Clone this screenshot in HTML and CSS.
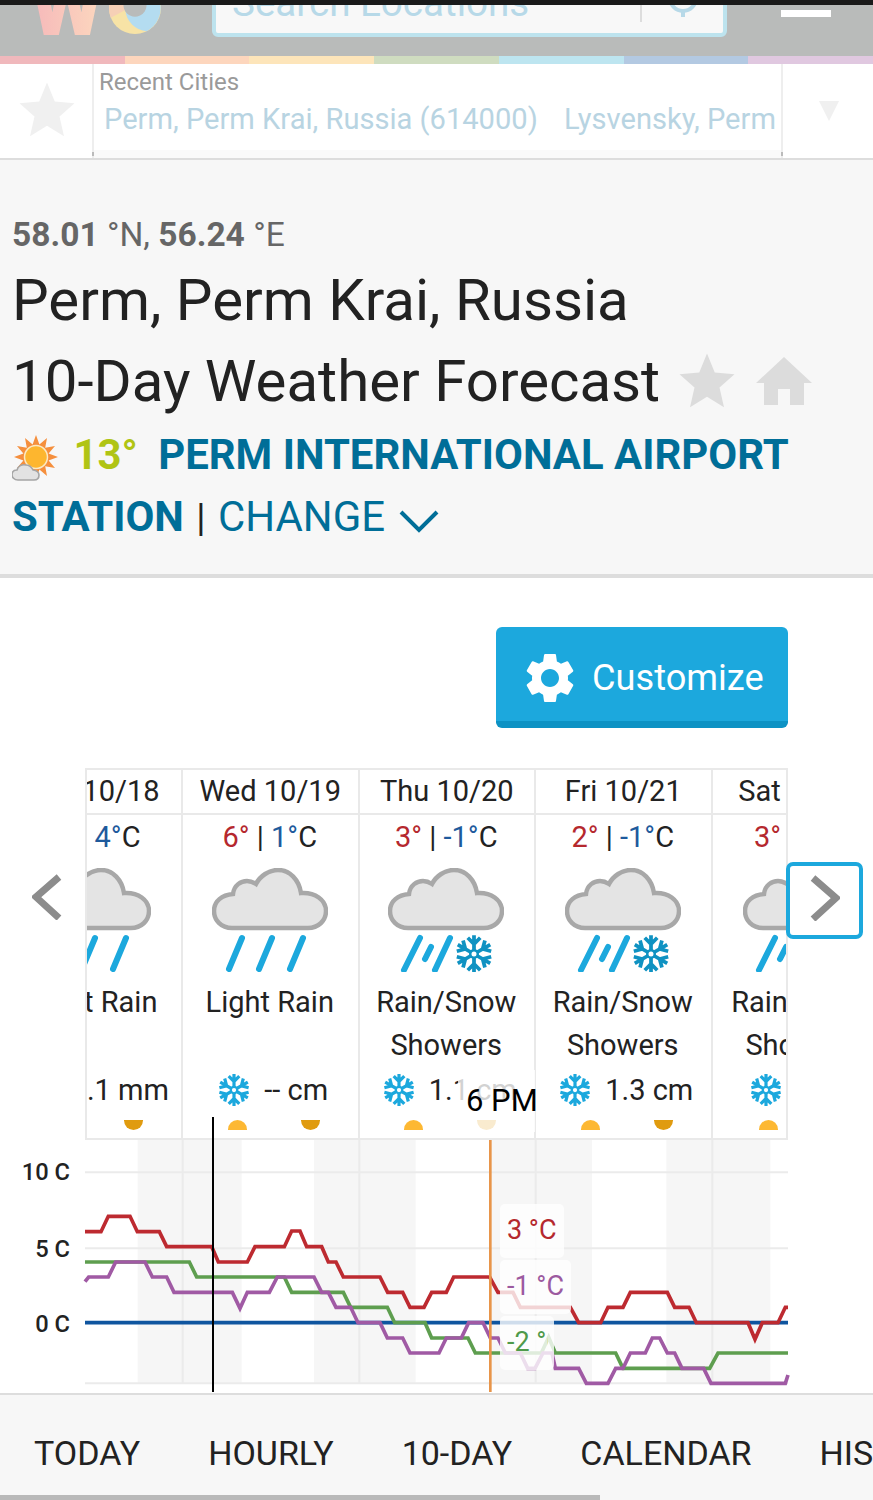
FILE: index.html
```html
<!DOCTYPE html>
<html lang="en">
<head>
  <meta charset="UTF-8" />
  <meta name="viewport" content="width=device-width, initial-scale=1.0" />
  <title>Perm 10-Day Weather Forecast</title>
  <link rel="stylesheet" href="styles.css">
</head>
<body>
  <svg class="defs" width="0" height="0">
    <defs>
      <path id="cloud" d="M20 60C9 60 2 52 2 43C2 33 10 27 21 26C22 17 29 13 35 13C38 13 41 14 44 16C48 8 57 2 66 2C78 2 87 12 89 25C103 24 114 32 114 43C114 53 106 60 96 60Z" fill="#e4e4e4" stroke="#a8a8a8" stroke-width="4.5"/>
      <g id="arm">
        <path d="M0 0V-15M-5 -13L0 -8L5 -13" fill="none" stroke="currentColor" stroke-width="3"/>
      </g>
      <symbol id="flake" viewBox="-16 -16 32 32">
        <use href="#arm"/>
        <use href="#arm" transform="rotate(60)"/>
        <use href="#arm" transform="rotate(120)"/>
        <use href="#arm" transform="rotate(180)"/>
        <use href="#arm" transform="rotate(240)"/>
        <use href="#arm" transform="rotate(300)"/>
        <circle r="3" fill="#fff" stroke="currentColor" stroke-width="2"/>
      </symbol>
      <symbol id="rain-icon" viewBox="0 0 116 104">
        <use href="#cloud"/>
        <path d="M30 70L17 101M60 70L47 101M91 70L78 101" stroke="#1ca8dd" stroke-width="6" stroke-linecap="round" fill="none"/>
      </symbol>
      <symbol id="mix-icon" viewBox="0 0 116 104">
        <use href="#cloud"/>
        <path d="M32 70L16 102M43 79L37 91M62 70L47 102" stroke="#1ca8dd" stroke-width="6" stroke-linecap="round" fill="none"/>
        <use href="#flake" x="66" y="66" width="40" height="40" class="flake-dark"/>
      </symbol>
      <polygon id="star" points="12 1 15.1 8.6 23 9.3 17 14.6 18.8 22.5 12 18.3 5.2 22.5 7 14.6 1 9.3 8.9 8.6"/>
    </defs>
  </svg>

  <div class="status-bar"></div>

  <header class="site-header">
    <div class="logo">
      <span class="logo-w">W</span>
      <svg class="logo-ring" width="54" height="54" viewBox="0 0 56 56">
        <circle cx="28" cy="28" r="27" fill="#f7e3a6"/>
        <path d="M28 1A27 27 0 0 0 3 38L18 30A10 10 0 0 1 28 18Z" fill="#f6d0b6"/>
        <path d="M28 1A27 27 0 0 1 40 52A24 24 0 0 1 18 30Z" fill="#b4dcf0"/>
        <circle cx="28" cy="25" r="12" fill="#b9bbba"/>
      </svg>
    </div>
    <div class="search">
      <span class="search-text">Search Locations</span>
      <span class="search-divider"></span>
      <svg class="search-icon" width="32" height="32" viewBox="0 0 32 32">
        <circle cx="16" cy="0" r="13" fill="none" stroke="#b7d9e8" stroke-width="4"/>
        <path d="M16 13V19" stroke="#b7d9e8" stroke-width="4"/>
      </svg>
    </div>
    <div class="menu-bar"></div>
  </header>

  <div class="rainbow">
    <span class="c1"></span><span class="c2"></span><span class="c3"></span><span class="c4"></span><span class="c5"></span><span class="c6"></span><span class="c7"></span>
  </div>

  <div class="recent">
    <div class="recent-star">
      <svg width="60" height="60" viewBox="0 0 24 24"><use href="#star"/></svg>
    </div>
    <div class="recent-mid">
      <div class="recent-title">Recent Cities</div>
      <div class="recent-links">
        <a>Perm, Perm Krai, Russia (614000)</a>
        <a>Lysvensky, Perm Krai, Russia</a>
      </div>
    </div>
    <div class="recent-drop"><span class="tri"></span></div>
  </div>

  <section class="location">
    <div class="coords"><b>58.01</b> °N, <b>56.24</b> °E</div>
    <h1 class="city-title">Perm, Perm Krai, Russia<br>10-Day Weather Forecast<svg class="title-star" width="60" height="60" viewBox="0 0 24 24"><use href="#star"/></svg><svg class="title-home" width="56" height="48" viewBox="0 0 56 48"><path d="M28 0L56 26H48V48H34V32H22V48H8V26H0Z"/></svg></h1>
    <div class="station">
      <svg class="sun-icon" width="48" height="46" viewBox="-24 -22 48 46">
        <polygon fill="#f58f3d" points="22,0 12.6,3.4 19,11 9.2,9.2 11,19 3.4,12.6 0,22 -3.4,12.6 -11,19 -9.2,9.2 -19,11 -12.6,3.4 -22,0 -12.6,-3.4 -19,-11 -9.2,-9.2 -11,-19 -3.4,-12.6 0,-22 3.4,-12.6 11,-19 9.2,-9.2 19,-11 12.6,-3.4"/>
        <circle r="11.5" fill="#fdb62f" stroke="#fbe9c4" stroke-width="1.5"/>
        <path d="M-18 23C-22 23 -24 20 -24 18C-24 15 -22 13 -19 13C-18 9 -14 7 -10 8C-6 8 -4 11 -3 13C1 13 3 16 3 18C3 21 1 23 -2 23Z" fill="#e2e2e2" stroke="#a5a5a5" stroke-width="1.6"/>
      </svg>
      <span class="station-temp">13°</span>
      <a class="station-name">PERM INTERNATIONAL AIRPORT STATION</a>
      <span class="pipe">|</span>
      <a class="station-change">CHANGE</a>
      <svg class="change-arrow" width="40" height="24" viewBox="0 0 40 24"><path d="M2 3L20 21L38 3" fill="none" stroke="#006e98" stroke-width="4"/></svg>
    </div>
  </section>

  <div class="customize-row">
    <button class="customize">
      <svg width="48" height="50" viewBox="2.5 2 19 20"><path fill="#fff" d="M19.14 12.94c.04-.3.06-.61.06-.94 0-.32-.02-.64-.07-.94l2.03-1.58c.18-.14.23-.41.12-.61l-1.92-3.32c-.12-.22-.37-.29-.59-.22l-2.39.96c-.5-.38-1.03-.7-1.62-.94l-.36-2.54c-.04-.24-.24-.41-.48-.41h-3.84c-.24 0-.43.17-.47.41l-.36 2.54c-.59.24-1.13.57-1.62.94l-2.39-.96c-.22-.08-.47 0-.59.22L2.74 8.87c-.12.21-.08.47.12.61l2.03 1.58c-.05.3-.09.63-.09.94s.02.64.07.94l-2.03 1.58c-.18.14-.23.41-.12.61l1.92 3.32c.12.22.37.29.59.22l2.39-.96c.5.38 1.03.7 1.62.94l.36 2.54c.05.24.24.41.48.41h3.84c.24 0 .44-.17.47-.41l.36-2.54c.59-.24 1.13-.56 1.62-.94l2.39.96c.22.08.47 0 .59-.22l1.92-3.32c.12-.22.07-.47-.12-.61l-2.01-1.58zM12 15.6c-1.98 0-3.6-1.62-3.6-3.6s1.62-3.6 3.6-3.6 3.6 1.62 3.6 3.6-1.62 3.6-3.6 3.6z"/></svg>
      <span>Customize</span>
    </button>
  </div>

  <div class="forecast">
    <svg class="arrow-prev" width="30" height="46" viewBox="0 0 30 46"><path d="M27 3L4 23L27 44" fill="none" stroke="#8c8c8c" stroke-width="7"/></svg>
    <button class="arrow-next">
      <svg width="30" height="46" viewBox="0 0 30 46"><path d="M3 3L26 23L3 44" fill="none" stroke="#8c8c8c" stroke-width="7"/></svg>
    </button>

    <div class="days">
      <div class="days-track">
        <div class="day">
          <div class="day-date">Tue 10/18</div>
          <div class="day-temp"><span class="hi">7°</span> | <span class="lo">4°</span>C</div>
          <svg class="day-icon" width="116" height="104"><use href="#rain-icon"/></svg>
          <div class="day-cond">Light Rain</div>
          <div class="day-precip"><svg width="34" height="34"><use href="#flake"/></svg><span>0.1 mm</span></div>
          <div class="day-sun"><span class="sunrise"></span><span class="sunset"></span></div>
        </div>
        <div class="day">
          <div class="day-date">Wed 10/19</div>
          <div class="day-temp"><span class="hi">6°</span> | <span class="lo">1°</span>C</div>
          <svg class="day-icon" width="116" height="104"><use href="#rain-icon"/></svg>
          <div class="day-cond">Light Rain</div>
          <div class="day-precip"><svg width="34" height="34"><use href="#flake"/></svg><span>-- cm</span></div>
          <div class="day-sun"><span class="sunrise"></span><span class="sunset"></span></div>
        </div>
        <div class="day">
          <div class="day-date">Thu 10/20</div>
          <div class="day-temp"><span class="hi">3°</span> | <span class="lo">-1°</span>C</div>
          <svg class="day-icon" width="116" height="104"><use href="#mix-icon"/></svg>
          <div class="day-cond">Rain/Snow Showers</div>
          <div class="day-precip"><svg width="34" height="34"><use href="#flake"/></svg><span>1.1 cm</span></div>
          <div class="day-sun"><span class="sunrise"></span><span class="sunset"></span></div>
        </div>
        <div class="day">
          <div class="day-date">Fri 10/21</div>
          <div class="day-temp"><span class="hi">2°</span> | <span class="lo">-1°</span>C</div>
          <svg class="day-icon" width="116" height="104"><use href="#mix-icon"/></svg>
          <div class="day-cond">Rain/Snow Showers</div>
          <div class="day-precip"><svg width="34" height="34"><use href="#flake"/></svg><span>1.3 cm</span></div>
          <div class="day-sun"><span class="sunrise"></span><span class="sunset"></span></div>
        </div>
        <div class="day">
          <div class="day-date">Sat 10/22</div>
          <div class="day-temp"><span class="hi">3°</span> | <span class="lo">1°</span>C</div>
          <svg class="day-icon" width="116" height="104"><use href="#mix-icon"/></svg>
          <div class="day-cond">Rain/Snow Showers</div>
          <div class="day-precip"><svg width="34" height="34"><use href="#flake"/></svg><span>-- cm</span></div>
          <div class="day-sun"><span class="sunrise"></span><span class="sunset"></span></div>
        </div>
      </div>
    </div>

    <div class="chart">
      <!-- coordinates are 3x page pixels -->
      <svg class="chart-svg" width="703" height="252" viewBox="255 0 2109 756">
        <g fill="#f6f6f6">
          <rect x="413" y="0" width="312" height="730"/>
          <rect x="942" y="0" width="305" height="730"/>
          <rect x="1474" y="0" width="302" height="730"/>
          <rect x="1999" y="0" width="312" height="730"/>
        </g>
        <path class="grid" d="M255 97H2364M255 325H2364M255 730H2364M548 0V730M1078 0V730M1607 0V730M2137 0V730"/>
        <g class="axis">
          <text x="210" y="119">10 C</text>
          <text x="210" y="350">5 C</text>
          <text x="210" y="576">0 C</text>
        </g>
        <path class="line-zero" d="M255 548H2364"/>
        <polyline class="line-green" points="255,366 568,366 590,411 853,411 875,457 1030,457 1052,502 1162,502 1184,548 1275,548 1295,594 1404,594 1426,639 1624,639 1646,592 1666,639 1847,639 1869,685 2129,685 2154,639 2364,639"/>
        <polyline class="line-purple" points="255,425 266,411 325,411 347,366 435,366 457,411 500,411 522,457 697,457 720,505 742,457 808,457 832,411 942,411 965,457 985,457 1008,502 1052,502 1074,548 1140,548 1162,594 1208,594 1230,639 1317,639 1339,594 1384,594 1406,548 1449,548 1471,594 1494,594 1516,639 1561,639 1583,685 1605,685 1629,639 1656,639 1666,685 1736,685 1759,730 1824,730 1847,685 1869,685 1891,639 1936,639 1957,594 1979,594 2002,639 2024,639 2046,685 2111,685 2133,730 2356,730 2364,705"/>
        <polyline class="line-red" points="255,275 303,275 325,229 390,229 412,275 478,275 500,320 635,320 655,366 742,366 765,320 853,320 875,273 900,273 920,320 965,320 985,366 1008,366 1030,411 1140,411 1163,457 1208,457 1230,502 1272,502 1295,457 1339,457 1361,411 1469,411 1494,457 1539,457 1561,502 1711,502 1736,548 1802,548 1824,502 1869,502 1891,457 2002,457 2024,502 2067,502 2089,548 2244,548 2265,598 2287,548 2334,548 2356,502 2364,502"/>
        <path class="now-line" d="M639 -69V756"/>
        <path class="hover-line" d="M1471 0V756"/>
      </svg>
      <div class="hover-time">6 PM</div>
      <div class="tip tip-hi">3 °C</div>
      <div class="tip tip-feel">-1 °C</div>
      <div class="tip tip-dew"><span>-2 °C</span></div>
    </div>
  </div>

  <nav class="tabs">
    <a>TODAY</a>
    <a>HOURLY</a>
    <a>10-DAY</a>
    <a>CALENDAR</a>
    <a>HISTORY</a>
    <span class="tabs-scroll"></span>
  </nav>
</body>
</html>
```

FILE: styles.css
```css
html, body {
  margin: 0;
  padding: 0;
}
body {
  font-family: Roboto, "Liberation Sans", sans-serif;
  color: #222;
  background: #fff;
  width: 873px;
  height: 1500px;
  overflow: hidden;
}
.defs {
  position: absolute;
}
.status-bar {
  height: 5px;
  background: #1a1a1a;
}

/* header */
.site-header {
  height: 51px;
  background: #b9bbba;
  display: flex;
  align-items: flex-end;
  overflow: hidden;
}
.logo {
  width: 212px;
  height: 51px;
  flex: none;
  display: flex;
  align-items: flex-end;
  padding: 0 0 21px 30px;
  box-sizing: border-box;
}
.logo-w {
  font-size: 85px;
  font-weight: 900;
  line-height: 62px;
  height: 62px;
  flex: none;
  margin-bottom: -2px;
  background: linear-gradient(90deg, #f6b8ba, #fcd8be);
  -webkit-background-clip: text;
  background-clip: text;
  color: transparent;
}
.logo-ring {
  flex: none;
  margin-left: 4px;
}
.search {
  width: 515px;
  height: 60px;
  flex: none;
  margin-bottom: 19px;
  box-sizing: border-box;
  background: #f8f8f8;
  border: 4px solid #bde3ee;
  border-radius: 6px;
  display: flex;
  align-items: flex-end;
  padding: 0 0 10px 16px;
}
.search-text {
  flex: 1;
  font-size: 38.6px;
  line-height: 40px;
  color: #b7d9e8;
}
.search-divider {
  width: 2px;
  height: 30px;
  margin-bottom: 1px;
  background: #ddd;
}
.search-icon {
  margin: 0 24px -7px 25px;
}
.menu-bar {
  width: 50px;
  height: 7px;
  background: #fff;
  align-self: flex-start;
  margin: 5px 0 0 54px;
}
.rainbow {
  height: 8px;
  display: flex;
}
.rainbow span {
  flex: 1;
}
.c1 { background: #f0b8bc; }
.c2 { background: #fdd6bd; }
.c3 { background: #fde5ba; }
.c4 { background: #cfdcc0; }
.c5 { background: #bde5f0; }
.c6 { background: #b3c9e2; }
.c7 { background: #e0c8e0; }

/* recent cities */
.recent {
  height: 96px;
  box-sizing: border-box;
  display: flex;
  border-bottom: 2px solid #ddd;
}
.recent-star {
  width: 92px;
  flex: none;
  padding: 16px 0 0 17px;
  box-sizing: border-box;
  fill: #f0f0f0;
}
.recent-mid {
  position: relative;
  width: 691px;
  flex: none;
  box-sizing: border-box;
  border-left: 2px solid #eee;
  border-right: 2px solid #eee;
  padding-left: 5px;
  background: linear-gradient(#fff 86px, #fafafa 86px);
}
.recent-mid::after {
  content: "";
  position: absolute;
  left: -2px;
  right: -2px;
  bottom: 2px;
  height: 4px;
  border-left: 2px solid #bbb;
  border-right: 2px solid #bbb;
}
.recent-title {
  font-size: 24px;
  line-height: 36px;
  color: #9a9a9a;
}
.recent-links {
  font-size: 29.1px;
  line-height: 40px;
  margin-top: -1px;
  padding-left: 5px;
  color: #b8d4e2;
  overflow: hidden;
  white-space: nowrap;
}
.recent-links a {
  margin-right: 19px;
}
.recent-drop {
  flex: 1;
  padding: 37px 0 0 36px;
}
.tri {
  display: block;
  width: 0;
  height: 0;
  border-left: 10px solid transparent;
  border-right: 10px solid transparent;
  border-top: 20px solid #f0f0f0;
}

/* location block */
.location {
  background: #f7f7f7;
  height: 418px;
  box-sizing: border-box;
  padding: 55px 12px 0;
  border-bottom: 4px solid #ddd;
}
.coords {
  font-size: 33.5px;
  line-height: 40px;
  color: #666;
}
.city-title {
  margin: 5px 0 0;
  font-size: 58.2px;
  font-weight: 400;
  line-height: 81px;
  color: #222;
}
.title-star {
  vertical-align: -10px;
  margin-left: 17px;
  fill: #dcdcdc;
}
.title-home {
  vertical-align: -4px;
  margin-left: 19px;
  fill: #dcdcdc;
}
.station {
  font-size: 41.9px;
  line-height: 62px;
  margin-top: 2px;
}
.sun-icon {
  vertical-align: -12px;
}
.station-temp {
  font-weight: 700;
  color: #b0c414;
  margin: 0 10px 0 3px;
}
.station-name {
  font-weight: 700;
  color: #006e98;
}
.pipe {
  color: #222;
  font-size: 38px;
  margin: 0 2px;
}
.station-change {
  color: #006e98;
}
.change-arrow {
  vertical-align: -2px;
  margin-left: 4px;
}

/* customize */
.customize-row {
  display: flex;
  justify-content: flex-end;
  padding: 49px 85px 40px 0;
}
.customize {
  width: 292px;
  height: 101px;
  box-sizing: border-box;
  display: flex;
  align-items: center;
  gap: 18px;
  padding: 7px 0 0 30px;
  border: 0;
  border-bottom: 7px solid #0d92c4;
  border-radius: 6px;
  background: #1ca8dd;
  color: #fff;
  font-family: inherit;
  font-size: 36.2px;
}

/* forecast table */
.forecast {
  position: relative;
  padding: 0 85px;
}
.arrow-prev {
  position: absolute;
  left: 32px;
  top: 106px;
}
.arrow-next {
  position: absolute;
  z-index: 2;
  left: 786px;
  top: 94px;
  width: 77px;
  height: 77px;
  box-sizing: border-box;
  padding: 0 0 5px 20px;
  display: flex;
  align-items: center;
  border: 4px solid #1ca8dd;
  border-radius: 7px;
  background: #fff;
}
.days {
  height: 372px;
  box-sizing: border-box;
  border: 2px solid #e9e9e9;
  overflow: hidden;
}
.days-track {
  display: flex;
  margin-left: -80.5px;
}
.day {
  width: 176.5px;
  flex: none;
  box-sizing: border-box;
  border-right: 2px solid #e9e9e9;
  padding-right: 1px;
  height: 368px;
  text-align: center;
  font-size: 29px;
  color: #222;
}
.day:last-child {
  padding-left: 4px;
}
.day:last-child .day-date {
  margin-left: -4px;
  padding-left: 4px;
}
.day-date {
  height: 45px;
  line-height: 43px;
  box-sizing: border-box;
  margin-right: -1px;
  border-bottom: 2px solid #e9e9e9;
  white-space: nowrap;
}
.day-temp {
  height: 44px;
  line-height: 44px;
  white-space: nowrap;
}
.hi { color: #b5282e; }
.lo { color: #1e5a9c; }
.day-icon {
  display: block;
  margin: 9px auto 0;
}
.day-cond {
  margin-top: 9px;
  height: 86px;
  line-height: 43px;
}
.day-precip {
  height: 46px;
  padding-left: 6px;
  box-sizing: border-box;
  display: flex;
  align-items: center;
  justify-content: center;
  gap: 13px;
  white-space: nowrap;
  color: #222;
}
.day-precip svg {
  color: #1ca8dd;
  flex: none;
}
.flake-dark {
  color: #0f92c2;
}
.day-sun {
  display: flex;
  justify-content: center;
  gap: 54px;
  padding-left: 8px;
  margin-top: 7px;
}
.sunrise, .sunset {
  width: 19px;
  height: 10px;
}
.sunrise {
  background: #fdb833;
  border-radius: 10px 10px 0 0;
}
.sunset {
  background: #e09b0f;
  border-radius: 0 0 10px 10px;
}

/* chart */
.chart {
  position: relative;
  height: 252px;
  margin-bottom: 1px;
}
.chart-svg {
  display: block;
  overflow: visible;
}
.chart-svg polyline,
.chart-svg path {
  fill: none;
}
.grid {
  stroke: #ebebeb;
  stroke-width: 6;
}
.axis text {
  font-size: 71px;
  font-weight: 500;
  font-family: Roboto, "Liberation Sans", sans-serif;
  text-anchor: end;
  fill: #222;
}
.line-zero {
  stroke: #0f559f;
  stroke-width: 11;
}
.line-red {
  stroke: #bd2a30;
  stroke-width: 11;
}
.line-green {
  stroke: #5e9e4f;
  stroke-width: 11;
}
.line-purple {
  stroke: #a05aa4;
  stroke-width: 11;
}
.now-line {
  stroke: #000;
  stroke-width: 6;
}
.hover-line {
  stroke: #e8954a;
  stroke-width: 8;
}
.hover-time {
  position: absolute;
  left: 373px;
  top: -70px;
  width: 77px;
  height: 62px;
  box-sizing: border-box;
  padding: 10px 0 0 8px;
  background: rgba(255, 255, 255, 0.8);
  font-size: 31px;
  line-height: 42px;
  color: #000;
  white-space: nowrap;
}
.tip {
  position: absolute;
  left: 415px;
  height: 54px;
  box-sizing: border-box;
  padding-left: 7px;
  border-radius: 5px;
  background: rgba(255, 255, 255, 0.8);
  font-size: 27px;
  line-height: 52px;
  white-space: nowrap;
  overflow: hidden;
}
.tip-hi {
  top: 64px;
  width: 64px;
  color: #b5282e;
}
.tip-feel {
  top: 120px;
  width: 71px;
  color: #9c5aa0;
}
.tip-dew {
  top: 176px;
  width: 54px;
  color: #4f9a4b;
}
.tip-dew span {
  display: block;
  width: 41px;
  overflow: hidden;
}

/* bottom tabs */
.tabs {
  position: relative;
  height: 107px;
  box-sizing: border-box;
  background: #f7f7f7;
  border-top: 2px solid #ddd;
  padding: 38px 0 0 34px;
  display: flex;
  gap: 68px;
  overflow: hidden;
  white-space: nowrap;
  font-size: 34px;
  line-height: 40px;
  color: #222;
}
.tabs-scroll {
  position: absolute;
  left: 0;
  bottom: 0;
  width: 600px;
  height: 5px;
  background: #b9b9b9;
}
```
